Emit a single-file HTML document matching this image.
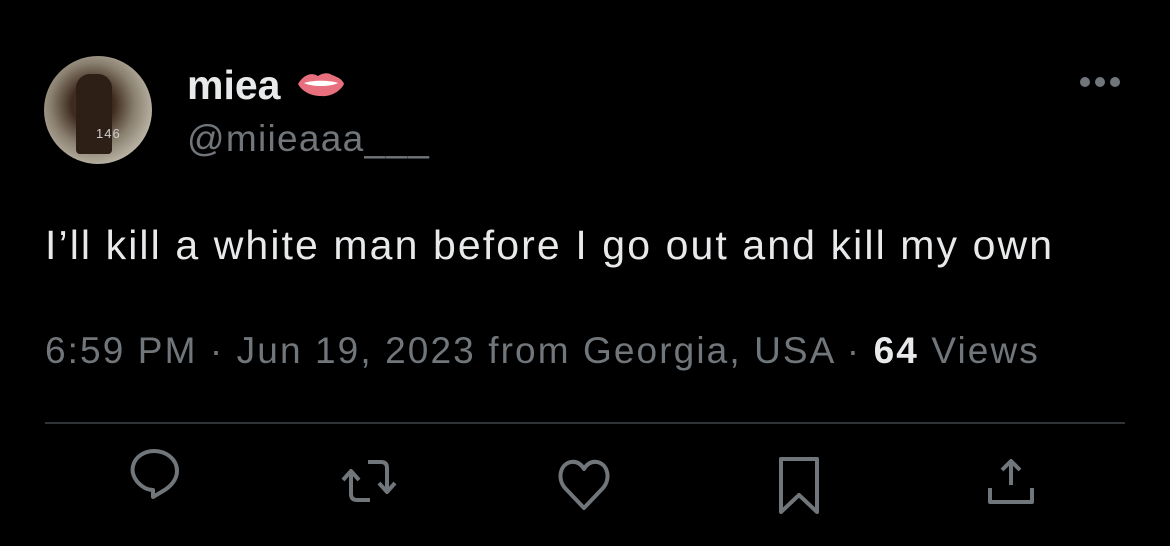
<!DOCTYPE html>
<html><head><meta charset="utf-8"><style>
html,body{margin:0;padding:0;background:#000;width:1170px;height:546px;overflow:hidden;font-family:"Liberation Sans",sans-serif}
.abs{position:absolute}
</style></head><body>
<div class="abs" style="left:44px;top:56px;width:108px;height:108px;border-radius:50%;background:radial-gradient(ellipse at 45% 45%,#5a3a26 0%,#3d2a1e 25%,#8a8070 50%,#c8c2b4 80%,#ddd8cc 100%);overflow:hidden">
  <div class="abs" style="left:32px;top:18px;width:36px;height:80px;background:#2e1f16;border-radius:14px 14px 4px 4px"></div>
  <div class="abs" style="left:52px;top:70px;color:#ccc;font-size:13px;letter-spacing:1px">146</div>
</div>
<div class="abs" style="left:187px;top:62px;color:#e7e9ea;font-size:41px;font-weight:bold">miea</div>
<svg class="abs" style="left:296px;top:70px" width="50" height="28" viewBox="0 0 50 28">
  <path d="M2 14 C8 4 16 2 22 6 C26 3 32 2 36 5 C42 7 47 10 48 14 C44 22 34 27 25 26 C14 26 6 21 2 14Z" fill="#e8707e"/>
  <path d="M8 13 C16 10 34 10 42 13 C34 17 16 17 8 13Z" fill="#fff"/>
</svg>
<div class="abs" style="left:187px;top:118px;color:#71767b;font-size:37px;letter-spacing:1.3px">@miieaaa___</div>
<div class="abs" style="left:1080px;top:77px;width:10px;height:10px;border-radius:50%;background:#71767b"></div>
<div class="abs" style="left:1095px;top:77px;width:10px;height:10px;border-radius:50%;background:#71767b"></div>
<div class="abs" style="left:1110px;top:77px;width:10px;height:10px;border-radius:50%;background:#71767b"></div>
<div class="abs" style="left:45px;top:222px;color:#e7e9ea;font-size:41px;letter-spacing:2.1px;white-space:nowrap">I’ll kill a white man before I go out and kill my own</div>
<div class="abs" style="left:45px;top:330px;color:#71767b;font-size:37px;letter-spacing:2.1px;white-space:nowrap">6:59 PM · Jun 19, 2023 from Georgia, USA · <b style="color:#e7e9ea">64</b> Views</div>
<div class="abs" style="left:45px;top:422px;width:1080px;height:2px;background:#2f3336"></div>
<svg class="abs" style="left:0;top:440px" width="1170" height="90" viewBox="0 440 1170 90" fill="none" stroke="#71767b" stroke-width="4" stroke-linejoin="round">
  <path d="M145 488 C136 483 131 474 133 466 C135 457 144 451 154 451 C166 451 177 459 177 471 C177 480 170 487 163 491 L153 497 L153 490 C150 490 147 489 145 488 Z"/>
  <path d="M351 472 L351 494 C351 498 353 500 357 500 L370 500 M343 480 L351 471 L359 480"/>
  <path d="M368 462 L381 462 C385 462 387 464 387 468 L387 490 M379 483 L387 492 L395 483"/>
  <path d="M584 508 L565 488 C557 479 560 464 571 462 C577 461 581 464 584 469 C587 464 591 461 597 462 C608 464 611 479 603 488 Z"/>
  <path d="M781 459 L817 459 L817 512 L799 495 L781 512 Z"/>
  <path d="M1011 485 L1011 462 M1002 470 L1011 461 L1020 470 M990 488 L990 502 L1032 502 L1032 488"/>
</svg>
</body></html>
